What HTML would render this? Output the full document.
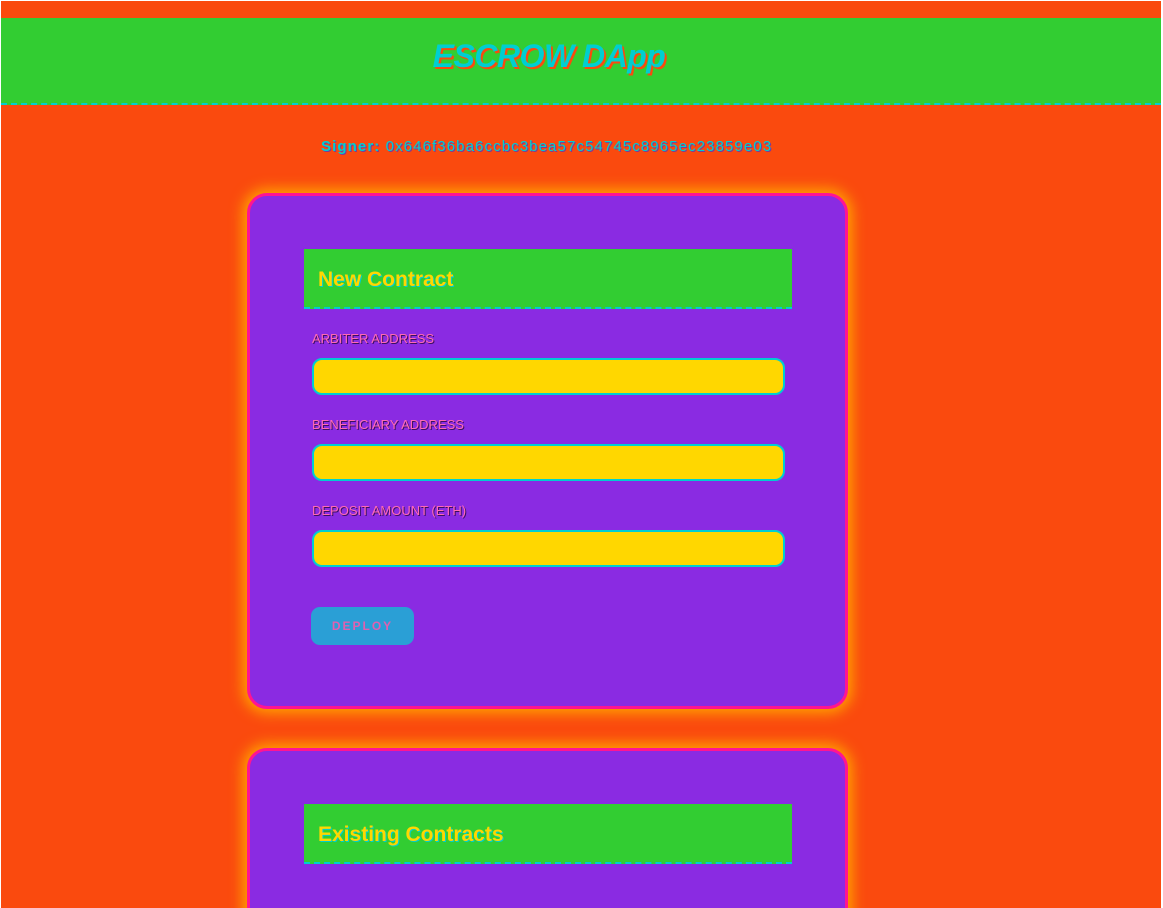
<!DOCTYPE html>
<html><head><style>
html,body{margin:0;padding:0;background:#fff;}
body{width:1163px;height:908px;overflow:hidden;font-family:"Comic Sans MS","Liberation Sans",sans-serif;}
.page{position:absolute;left:1px;top:1px;width:1160px;height:907px;background:#fa4a0e;overflow:hidden;}
.hdr{position:absolute;left:0;top:17px;width:1160px;height:85px;background:#32cd32;border-bottom:2px dashed #00ced1;}
.hdr h1{margin:0;position:absolute;left:0;width:1096px;text-align:center;top:20px;font-size:32px;font-style:italic;font-weight:bold;color:#00ced1;text-shadow:2px 2px 0 #fa4a0e;letter-spacing:-0.5px;}
.signer{position:absolute;left:320px;top:137px;font-size:15px;color:#00ced1;text-shadow:1px 1px 0 #7a3a9a;letter-spacing:1.1px;}
.card{position:absolute;left:246px;width:595px;background:#8a2be2;border:3px solid #ff1493;border-radius:20px;box-shadow:0 0 14px 4px #ffa500;}
.h2{position:absolute;left:54px;width:488px;height:58px;background:#32cd32;border-bottom:2px dashed #00ced1;}
.h2 span{position:absolute;left:14px;top:19px;font-size:21px;font-weight:bold;color:#ffd700;text-shadow:1px 1px 0 #00ced1;}
.lbl{position:absolute;left:62px;font-size:13px;color:#ff69b4;text-shadow:1px 1px 0 #3a1060;}
.inp{position:absolute;left:62px;width:469px;height:33px;background:#ffd700;border:2px solid #00ced1;border-radius:10px;}
.btn{position:absolute;left:61px;top:411px;width:103px;height:38px;background:#2a9fd6;border-radius:9px;color:#e060b0;font-size:12px;font-weight:bold;letter-spacing:2px;text-align:center;line-height:38px;}
</style></head><body><div class="page">
<div class="hdr"><h1>ESCROW DApp</h1></div>
<div class="signer"><b>Signer:</b> 0x646f36ba6ccbc3bea57c54745c8965ec23859e03</div>
<div class="card" style="top:747px;height:200px;">
 <div class="h2" style="top:53px;"><span>Existing Contracts</span></div>
</div>
<div class="card" style="top:192px;height:510px;">
 <div class="h2" style="top:53px;"><span>New Contract</span></div>
 <div class="lbl" style="top:135px;">ARBITER ADDRESS</div>
 <div class="inp" style="top:162px;"></div>
 <div class="lbl" style="top:221px;">BENEFICIARY ADDRESS</div>
 <div class="inp" style="top:248px;"></div>
 <div class="lbl" style="top:307px;">DEPOSIT AMOUNT (ETH)</div>
 <div class="inp" style="top:334px;"></div>
 <div class="btn">DEPLOY</div>
</div>
</div></body></html>
